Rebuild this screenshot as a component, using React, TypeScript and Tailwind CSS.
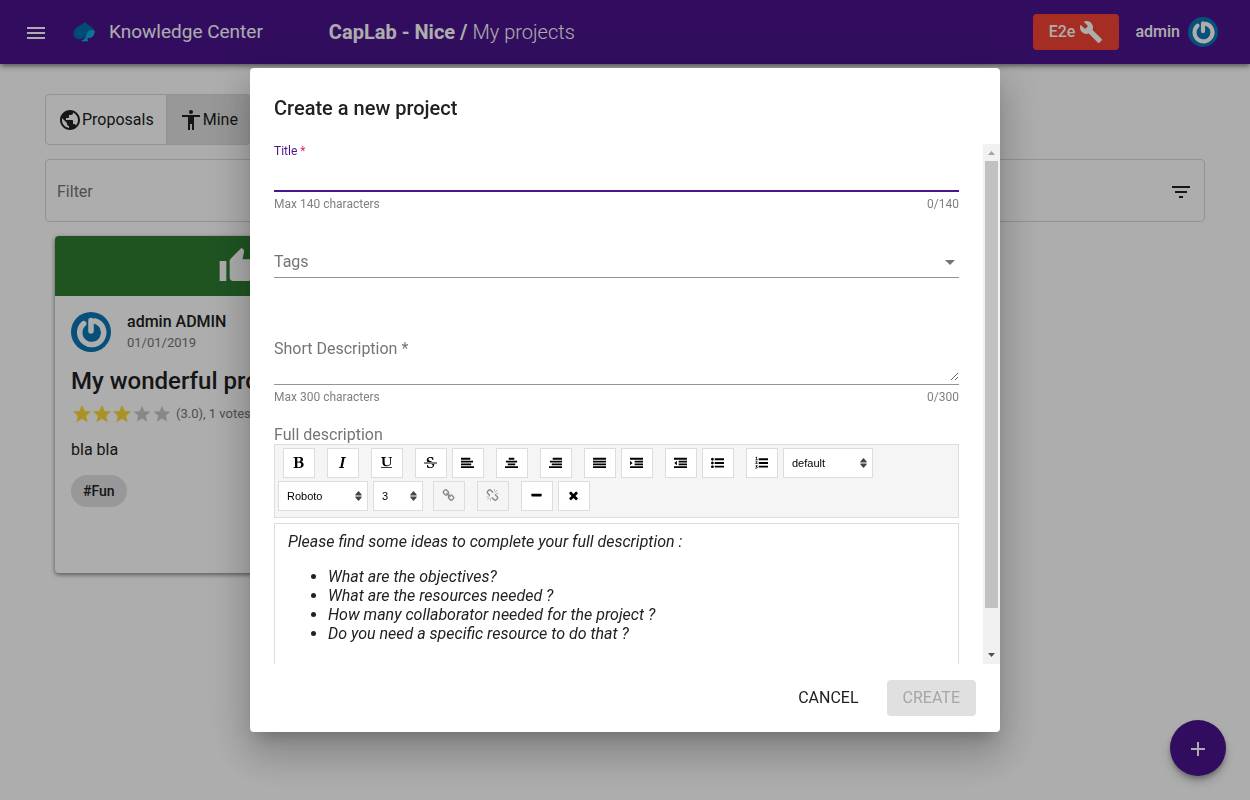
import type { ReactNode } from "react";
import {
  MdAccessibility,
  MdAdd,
  MdArrowDropDown,
  MdBuild,
  MdFilterList,
  MdMenu,
  MdPublic,
  MdStar,
  MdThumbUp,
} from "react-icons/md";

const glyphs = {
  bold: "M747 1521q74 32 140 32 376 0 376-335 0-114-41-180-27-44-61.5-74t-67.5-46.5-80.5-25-84-10.5-94.5-2q-73 0-101 10 0 53-.5 159t-.5 158q0 8-1 67.5t-.5 96.5 4.5 83.5 12 66.5zm-14-746q42 7 109 7 82 0 143-13t110-44.5 74.5-89.5 25.5-142q0-70-29-122.5t-79-82-108-43.5-124-14q-50 0-130 10 0 50 4 151t4 152q0 27-.5 80t-.5 79q0 46 1 69zm-541 889l2-94q15-4 85-16t106-27q7-12 12.5-27t8.5-33.5 5.5-32.5 3-37.5.5-34v-65.5q0-982-22-1025-4-8-22-14.5t-44.5-11-49.5-7-48.5-4.5-30.5-3l-4-83q98-2 340-11.5t373-9.5q23 0 68.5.5t67.5.5q70 0 136.5 13t128.5 42 108 71 74 104.5 28 137.5q0 52-16.5 95.5t-39 72-64.5 57.5-73 45-84 40q154 35 256.5 134t102.5 248q0 100-35 179.5t-93.5 130.5-138 85.5-163.5 48.5-176 14q-44 0-132-3t-132-3q-106 0-307 11t-231 12z",
  italic: "M384 1662l17-85q6-2 81.5-21.5t111.5-37.5q28-35 41-101 1-7 62-289t114-543.5 52-296.5v-25q-24-13-54.5-18.5t-69.5-8-58-5.5l19-103q33 2 120 6.5t149.5 7 120.5 2.5q48 0 98.5-2.5t121-7 98.5-6.5q-5 39-19 89-30 10-101.5 28.5t-108.5 33.5q-8 19-14 42.5t-9 40-7.5 45.5-6.5 42q-27 148-87.5 419.5t-77.5 355.5q-2 9-13 58t-20 90-16 83.5-6 57.5l1 18q17 4 185 31-3 44-16 99-11 0-32.5 1.5t-32.5 1.5q-29 0-87-10t-86-10q-138-2-206-2-51 0-143 9t-121 11z",
  underline: "M176 223q-37-2-45-4l-3-88q13-1 40-1 60 0 112 4 132 7 166 7 86 0 168-3 116-4 146-5 56 0 86-2l-1 14 2 64v9q-60 9-124 9-60 0-79 25-13 14-13 132 0 13 .5 32.5t.5 25.5l1 229 14 280q6 124 51 202 35 59 96 92 88 47 177 47 104 0 191-28 56-18 99-51 48-36 65-64 36-56 53-114 21-73 21-229 0-79-3.5-128t-11-122.5-13.5-159.5l-4-59q-5-67-24-88-34-35-77-34l-100 2-14-3 2-86h84l205 10q76 3 196-10l18 2q6 38 6 51 0 7-4 31-45 12-84 13-73 11-79 17-15 15-15 41 0 7 1.5 27t1.5 31q8 19 22 396 6 195-15 304-15 76-41 122-38 65-112 123-75 57-182 89-109 33-255 33-167 0-284-46-119-47-179-122-61-76-83-195-16-80-16-237v-333q0-188-17-213-25-36-147-39zm1488 1409v-64q0-14-9-23t-23-9h-1472q-14 0-23 9t-9 23v64q0 14 9 23t23 9h1472q14 0 23-9t9-23z",
  strike: "M1760 896q14 0 23 9t9 23v64q0 14-9 23t-23 9h-1728q-14 0-23-9t-9-23v-64q0-14 9-23t23-9h1728zm-1277-64q-28-35-51-80-48-97-48-188 0-181 134-309 133-127 393-127 50 0 167 19 66 12 177 48 10 38 21 118 14 123 14 183 0 18-5 45l-12 3-84-6-14-2q-50-149-103-205-88-91-210-91-114 0-182 59-67 58-67 146 0 73 66 140t279 129q69 20 173 66 58 28 95 52h-743zm507 256h411q7 39 7 92 0 111-41 212-23 55-71 104-37 35-109 81-80 48-153 66-80 21-203 21-114 0-195-23l-140-40q-57-16-72-28-8-8-8-22v-13q0-108-2-156-1-30 0-68l2-37v-44l102-2q15 34 30 71t22.5 56 12.5 27q35 57 80 94 43 36 105 57 59 22 132 22 64 0 139-27 77-26 122-86 47-61 47-129 0-84-81-157-34-29-137-71z",
  left: "M0 256h1280v256H0zM0 640h1664v256H0zM0 1024h1408v256H0zM0 1408h1792v256H0z",
  center: "M512 256h768v256H512zM128 640h1536v256H128zM384 1024h1024v256H384zM0 1408h1792v256H0z",
  right: "M512 256h1280v256H512zM128 640h1664v256H128zM384 1024h1408v256H384zM0 1408h1792v256H0z",
  justify: "M0 256h1792v256H0zM0 640h1792v256H0zM0 1024h1792v256H0zM0 1408h1792v256H0z",
  indent: "M0 256h1792v256H0zM640 640h1152v256H640zM640 1024h1152v256H640zM0 1408h1792v256H0zM0 640l352 320L0 1280z",
  outdent: "M0 256h1792v256H0zM640 640h1152v256H640zM640 1024h1152v256H640zM0 1408h1792v256H0zM400 640L48 960l352 320z",
  ul: "M384 1472q0 80-56 136t-136 56-136-56-56-136 56-136 136-56 136 56 56 136zM384 960q0 80-56 136t-136 56-136-56-56-136 56-136 136-56 136 56 56 136zM384 448q0 80-56 136t-136 56-136-56-56-136 56-136 136-56 136 56 56 136zM512 320h1280v256H512zM512 832h1280v256H512zM512 1344h1280v256H512z",
  ol: "M512 320h1280v256H512zM512 832h1280v256H512zM512 1344h1280v256H512zM60 200L190 90h90v400h100v80H70v-80h110V220L110 280zM60 760q60-70 150-70 140 0 140 110 0 70-150 180h160v90H40v-80q200-150 200-190 0-40-50-40-40 0-80 50zM60 1270h290v70l-110 110q130 20 130 130 0 150-180 150-100 0-160-50l40-80q60 40 110 40 70 0 70-50 0-70-140-60l-20-40 100-130H60z",
  link: "M1520 1216q0-40-28-68l-208-208q-28-28-68-28-42 0-72 32 3 3 19 18.5t21.5 21.5 15 19 13 25.5 3.5 27.5q0 40-28 68t-68 28q-15 0-27.5-3.5t-25.5-13-19-15-21.5-21.5-18.5-19q-33 31-33 73 0 40 28 68l206 207q27 27 68 27 40 0 68-26l147-146q28-28 28-67zm-703-705q0-40-28-68l-206-207q-28-28-68-28-39 0-68 27l-147 146q-28 28-28 67 0 40 28 68l208 208q27 27 68 27 42 0 72-31-3-3-19-18.5t-21.5-21.5-15-19-13-25.5-3.5-27.5q0-40 28-68t68-28q15 0 27.5 3.5t25.5 13 19 15 21.5 21.5 18.5 19q33-31 33-73zm895 705q0 120-85 203l-147 146q-83 83-203 83-121 0-204-85l-206-207q-83-83-83-203 0-123 88-209l-88-88q-86 88-208 88-120 0-204-84l-208-208q-84-84-84-204t85-203l147-146q83-83 203-83 121 0 204 85l206 207q83 83 83 203 0 123-88 209l88 88q86-88 208-88 120 0 204 84l208 208q84 84 84 204z",
  unlink: "M503 1271l-256 256q-10 9-23 9-12 0-23-9-9-10-9-23t9-23l256-256q10-9 23-9t23 9q9 10 9 23t-9 23zm169 41v320q0 14-9 23t-23 9-23-9-9-23v-320q0-14 9-23t23-9 23 9 9 23zm-224-224q0 14-9 23t-23 9h-320q-14 0-23-9t-9-23 9-23 23-9h320q14 0 23 9t9 23zm1264 128q0 120-85 203l-147 146q-83 83-203 83-121 0-204-85l-334-335q-21-21-42-56l239-18 273 274q28 28 68 27.5t68-27.5l147-146q28-28 28-67 0-40-28-68l-274-275 18-239q35 21 56 42l336 336q84 86 84 204zm-617-724l-239 18-273-274q-28-28-68-28-39 0-68 27l-147 146q-28 28-28 67 0 40 28 68l274 274-18 240q-35-21-56-42l-336-336q-84-86-84-204 0-120 85-203l147-146q83-83 203-83 121 0 204 85l334 335q21 21 42 56zm633 84q0 14-9 23t-23 9h-320q-14 0-23-9t-9-23 9-23 23-9h320q14 0 23 9t9 23zm-544-544v320q0 14-9 23t-23 9-23-9-9-23v-320q0-14 9-23t23-9 23 9 9 23zm407 151l-256 256q-11 9-23 9t-23-9q-9-10-9-23t9-23l256-256q10-9 23-9t23 9q9 10 9 23t-9 23z",
  rule: "M1600 736v192q0 40-28 68t-68 28h-1216q-40 0-68-28t-28-68v-192q0-40 28-68t68-28h1216q40 0 68 28t28 68z",
  clear: "M1490 1322q0 40-28 68l-136 136q-28 28-68 28t-68-28l-294-294-294 294q-28 28-68 28t-68-28l-136-136q-28-28-28-68t28-68l294-294-294-294q-28-28-28-68t28-68l136-136q28-28 68-28t68 28l294 294 294-294q28-28 68-28t68 28l136 136q28 28 28 68t-28 68l-294 294 294 294q28 28 28 68z",
};

type Glyph = keyof typeof glyphs;

function ToolButton({ glyph, label, disabled = false }: { glyph: Glyph; label: string; disabled?: boolean }) {
  return (
    <button
      type="button"
      aria-label={label}
      disabled={disabled}
      className="flex h-[30px] w-8 items-center justify-center border border-[#ddd] bg-white pr-px pb-px text-black disabled:bg-[#f5f5f5] disabled:text-[#888]"
    >
      <svg viewBox="0 0 1792 1792" className="size-[13px] fill-current">
        <path d={glyphs[glyph]} />
      </svg>
    </button>
  );
}

function Group({ children, indent = false }: { children: ReactNode; indent?: boolean }) {
  return <div className={indent ? "ml-[5px] flex gap-3" : "flex gap-3"}>{children}</div>;
}

function ToolSelect({ label, value, narrow = false }: { label: string; value: string; narrow?: boolean }) {
  return (
    <div className={narrow ? "relative h-[30px] w-[50px]" : "relative h-[30px] w-[90px]"}>
      <select
        aria-label={label}
        defaultValue={value}
        className="h-full w-full appearance-none border border-[#ddd] bg-white pl-2 font-['Liberation_Sans',Arial,sans-serif] text-[11px] text-black"
      >
        <option>{value}</option>
      </select>
      <svg viewBox="0 0 7 10" className="pointer-events-none absolute top-[10px] right-[6px] h-[10px] w-[7px] fill-[#444]">
        <path d="M3.500 0L6.600 3.400V4.400H0.400V3.400zM3.500 10L6.600 6.600V5.600H0.400V6.600z" />
      </svg>
    </div>
  );
}

function Avatar({ className }: { className: string }) {
  return (
    <svg viewBox="0 0 40 40" role="img" aria-label="admin avatar" className={className}>
      <circle cx="20" cy="20" r="20" fill="#0a77b5" />
      <path
        d="M20 8.500V19M12.700 11.600A12 12 0 1 0 24 9"
        fill="none"
        stroke="#fff"
        strokeWidth="5.500"
        strokeLinecap="round"
        strokeLinejoin="round"
      />
    </svg>
  );
}

function Logo() {
  return (
    <svg viewBox="0 0 22 20" aria-hidden="true" className="h-5 w-[22px]">
      <path
        d="M12 0C9 3 .5 5.200 .5 11.200C.5 15 3 17.200 6.200 17.200C9 17.200 11 15.800 12.300 14C11.800 16.400 10.500 18 8 18.800C10 19.500 13.300 19.500 15.500 18.900C14.600 18 14.300 17 14.400 15.800C18.500 16.600 21.500 14.200 21.500 10.200C21.500 5 15 3.600 12 0z"
        fill="#0070ad"
      />
      <path
        d="M21.400 8.600C18 7.200 14.300 9 13.600 12.500C12.900 15.500 11.300 18 8 18.800C10 19.500 13.300 19.500 15.500 18.900C14.600 18 14.300 17 14.400 15.800C18.500 16.600 22.200 13.500 21.400 8.600z"
        fill="#12abdb"
      />
    </svg>
  );
}

function Page() {
  return (
    <div className="min-h-screen bg-white">
      <header className="flex h-16 items-center bg-[#4a148c] px-6 text-white shadow-[0_2px_4px_-1px_rgba(0,0,0,0.4),0_4px_5px_rgba(0,0,0,0.2)]">
        <button type="button" aria-label="Menu" className="pt-px">
          <MdMenu className="size-6" />
        </button>
        <a href="#home" className="ml-[25px] flex items-center gap-[14px] text-[19px]">
          <Logo />
          Knowledge Center
        </a>
        <h1 className="ml-[66px] text-xl font-light">
          <span className="font-bold">CapLab - Nice / </span>My projects
        </h1>
        <div className="ml-auto flex items-center gap-2 pr-2">
          <button type="button" className="mr-2 flex h-9 items-center gap-1 rounded bg-[#f44336] px-4 text-base font-medium">
            E2e
            <MdBuild className="size-6" />
          </button>
          <span className="text-base font-medium">admin</span>
          <Avatar className="size-[30px]" />
        </div>
      </header>
      <main className="px-[45px] pt-[30px] text-[#212121]">
        <div className="inline-flex h-[51px] rounded border border-black/15 text-base">
          <button type="button" className="flex items-center border-r border-black/15 px-3">
            <MdPublic className="size-6" />
            Proposals
          </button>
          <button type="button" className="flex items-center bg-[#e0e0e0] px-3">
            <MdAccessibility className="size-6" />
            Mine
          </button>
        </div>
        <div className="mt-[14px] flex h-[63px] items-center rounded border border-black/15 px-[11px] pt-[2px]">
          <input
            aria-label="Filter"
            placeholder="Filter"
            className="min-w-0 flex-1 text-base outline-none placeholder:text-[#757575]"
          />
          <button type="button" aria-label="Filter options">
            <MdFilterList className="size-6" />
          </button>
        </div>
        <section className="mt-[14px] grid grid-cols-3">
          <article className="mx-[10px] h-[337px] overflow-hidden rounded bg-white shadow-[0_2px_4px_rgba(0,0,0,0.35),0_1px_5px_rgba(0,0,0,0.2)]">
            <div className="flex h-[60px] items-center justify-center bg-[#2e7d32] text-white">
              <MdThumbUp className="size-10" />
            </div>
            <div className="p-4">
              <div className="flex items-start gap-4">
                <Avatar className="size-10" />
                <div>
                  <p className="text-base/5 font-medium">admin ADMIN</p>
                  <p className="text-[13px]/[22px] text-[#757575]">01/01/2019</p>
                </div>
              </div>
              <h2 className="mt-[11px] text-2xl font-medium">My wonderful project</h2>
              <div className="mt-[7px] ml-px flex h-5 items-center text-[13px] text-[#757575]">
                {[1, 2, 3, 4, 5].map((n) => (
                  <MdStar
                    key={n}
                    className={n <= 3 ? "-mx-px size-[22px] text-[#fdd835]" : "size-5 text-[#c8c8c8]"}
                  />
                ))}
                <span className="ml-1">(3.0), 1 votes</span>
              </div>
              <p className="mt-4 text-base/5">bla bla</p>
              <span className="mt-[15px] inline-flex h-8 items-center rounded-full bg-[#e0e0e0] px-3 pb-px text-sm font-medium">
                #Fun
              </span>
            </div>
          </article>
        </section>
      </main>
      <button
        type="button"
        aria-label="Add a project"
        className="fixed right-6 bottom-6 flex size-14 items-center justify-center rounded-full bg-[#4a148c] pt-px text-white shadow-[0_3px_5px_-1px_rgba(0,0,0,0.3),0_6px_10px_rgba(0,0,0,0.2)]"
      >
        <MdAdd className="size-6" />
      </button>
    </div>
  );
}

function Hint({ text, count }: { text: string; count: string }) {
  return (
    <div className="flex h-[23px] items-center justify-between text-xs text-[#808080]">
      <span>{text}</span>
      <span>{count}</span>
    </div>
  );
}

function Editor() {
  return (
    <>
      <div
        role="toolbar"
        aria-label="Text formatting"
        className="flex flex-wrap gap-x-[5px] gap-y-[3px] border border-[#ddd] bg-[#f5f5f5] px-[3px] pt-[3px] pb-[6px]"
      >
        <Group indent>
          <ToolButton glyph="bold" label="Bold" />
          <ToolButton glyph="italic" label="Italic" />
          <ToolButton glyph="underline" label="Underline" />
          <ToolButton glyph="strike" label="Strikethrough" />
        </Group>
        <Group>
          <ToolButton glyph="left" label="Align left" />
          <ToolButton glyph="center" label="Align center" />
          <ToolButton glyph="right" label="Align right" />
          <ToolButton glyph="justify" label="Justify" />
        </Group>
        <Group>
          <ToolButton glyph="indent" label="Indent" />
          <ToolButton glyph="outdent" label="Outdent" />
        </Group>
        <Group>
          <ToolButton glyph="ul" label="Bulleted list" />
          <ToolButton glyph="ol" label="Numbered list" />
        </Group>
        <ToolSelect label="Block style" value="default" />
        <ToolSelect label="Font" value="Roboto" />
        <ToolSelect label="Font size" value="3" narrow />
        <Group indent>
          <ToolButton glyph="link" label="Link" disabled />
          <ToolButton glyph="unlink" label="Unlink" disabled />
          <ToolButton glyph="rule" label="Horizontal line" />
        </Group>
        <ToolButton glyph="clear" label="Clear formatting" />
      </div>
      <div
        contentEditable
        suppressContentEditableWarning
        role="textbox"
        aria-multiline="true"
        aria-labelledby="full-description"
        className="mt-[5px] min-h-[186px] border border-[#ddd] px-[13px] py-2 text-base/[19px] text-[#212121] italic outline-none"
      >
        <p>Please find some ideas to complete your full description :</p>
        <ul className="mt-4 list-disc pl-10">
          <li>What are the objectives?</li>
          <li>What are the resources needed ?</li>
          <li>How many collaborator needed for the project ?</li>
          <li>Do you need a specific resource to do that ?</li>
        </ul>
      </div>
    </>
  );
}

function ScrollTrack() {
  return (
    <div aria-hidden="true" className="flex w-[17px] shrink-0 flex-col bg-[#f1f1f1]">
      <svg viewBox="0 0 17 17" className="size-[17px] shrink-0 fill-[#a3a3a3]">
        <path d="M5 11h7L8.500 7z" />
      </svg>
      <div className="flex flex-1 flex-col px-[2px]">
        <div className="h-[92%] bg-[#c1c1c1]" />
      </div>
      <svg viewBox="0 0 17 17" className="size-[17px] shrink-0 fill-[#505050]">
        <path d="M5 6h7L8.500 10z" />
      </svg>
    </div>
  );
}

function ProjectDialog() {
  return (
    <div className="fixed inset-0 flex items-center justify-center bg-black/32">
      <form
        role="dialog"
        aria-modal="true"
        aria-labelledby="dialog-title"
        className="flex w-3/5 flex-col overflow-hidden rounded bg-white shadow-[0_11px_15px_-7px_rgba(0,0,0,0.2),0_24px_38px_3px_rgba(0,0,0,0.14),0_9px_46px_8px_rgba(0,0,0,0.12)]"
      >
        <h2 id="dialog-title" className="px-6 pt-6 pb-5 text-xl/8 font-medium text-[#212121]">
          Create a new project
        </h2>
        <div className="flex h-[65vh]">
          <div className="min-w-0 flex-1 overflow-y-auto px-6 [scrollbar-width:none]">
            <label htmlFor="title" className="block text-xs/[14px] text-[#4a148c]">
              Title <span className="text-[#e91e63]">*</span>
            </label>
            <input id="title" required className="block h-[34px] w-full border-b-2 border-[#4a148c] outline-none" />
            <Hint text="Max 140 characters" count="0/140" />
            <button
              type="button"
              aria-haspopup="listbox"
              className="mt-8 flex h-[31px] w-full items-center justify-between border-b border-[#949494] text-base text-[#757575]"
            >
              Tags
              <MdArrowDropDown className="-mr-[3px] size-6" />
            </button>
            <label htmlFor="short-description" className="mt-[59px] block text-base text-[#757575]">
              Short Description *
            </label>
            <div className="border-b border-[#949494] pb-[3px]">
              <textarea
                id="short-description"
                required
                rows={1}
                className="block h-5 w-full resize-y text-sm/5 outline-none"
              />
            </div>
            <Hint text="Max 300 characters" count="0/300" />
            <p id="full-description" className="mt-[17px] text-base/[19px] text-[#757575]">
              Full description
            </p>
            <Editor />
          </div>
          <ScrollTrack />
        </div>
        <div className="flex justify-end gap-3 px-6 py-4 text-base">
          <button type="button" className="h-9 px-4 text-[#212121]">
            CANCEL
          </button>
          <button type="submit" disabled className="h-9 rounded bg-[#e0e0e0] px-4 text-[#a6a6a6]">
            CREATE
          </button>
        </div>
      </form>
    </div>
  );
}

export default function App() {
  return (
    <div className="font-['Roboto',sans-serif]">
      <Page />
      <ProjectDialog />
    </div>
  );
}
